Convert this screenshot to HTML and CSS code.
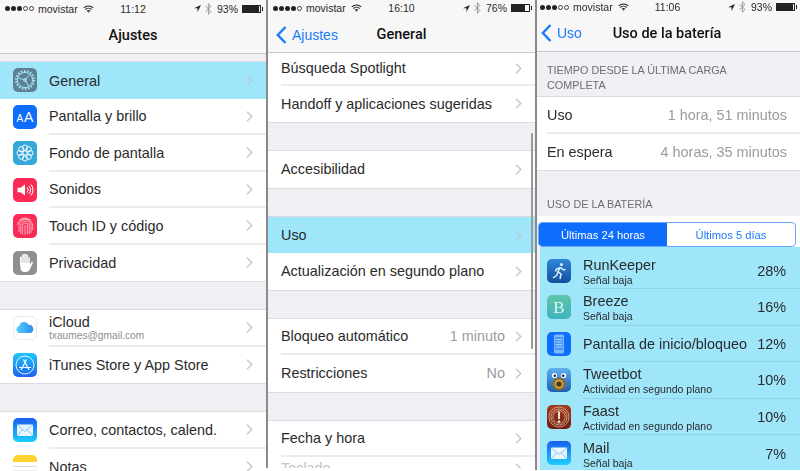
FILE: index.html
```html
<!DOCTYPE html>
<html lang="es">
<head>
  <meta charset="UTF-8">
  <title>Ajustes</title>
  <link rel="stylesheet" href="styles.css">
</head>
<body>

<svg class="defs" width="0" height="0">
  <defs>
    <linearGradient id="gBlue" x1="0" y1="0" x2="0" y2="1"><stop offset="0" stop-color="#1a5df0"/><stop offset="1" stop-color="#1bd0fd"/></linearGradient>
    <linearGradient id="gStore" x1="0" y1="0" x2="0" y2="1"><stop offset="0" stop-color="#1bc8fb"/><stop offset="1" stop-color="#1d62f0"/></linearGradient>
    <linearGradient id="gCloud" x1="0" y1="0" x2="1" y2="0"><stop offset="0" stop-color="#5ad0fa"/><stop offset="1" stop-color="#2a8df2"/></linearGradient>
    <linearGradient id="gRun" x1="0" y1="0" x2="0" y2="1"><stop offset="0" stop-color="#2f86d8"/><stop offset="1" stop-color="#134f9e"/></linearGradient>
    <linearGradient id="gBreeze" x1="0" y1="0" x2="0" y2="1"><stop offset="0" stop-color="#5fc6a8"/><stop offset="1" stop-color="#3fb4c0"/></linearGradient>
    <linearGradient id="gTweet" x1="0" y1="0" x2="0" y2="1"><stop offset="0" stop-color="#5fb0ee"/><stop offset="1" stop-color="#1f5fae"/></linearGradient>
    <linearGradient id="gFaast" x1="0" y1="0" x2="0" y2="1"><stop offset="0" stop-color="#a33c1c"/><stop offset="1" stop-color="#6f1f0c"/></linearGradient>

    <symbol id="chev" viewBox="0 0 7 11"><path d="M1 .8 5.800 5.500 1 10.200" fill="none" stroke="#c4c4c9" stroke-width="1.300"/></symbol>
    <symbol id="back" viewBox="0 0 11 18"><path d="M9.500 1 1.800 9l7.700 8" fill="none" stroke="#1a7bfb" stroke-width="2.400"/></symbol>
    <symbol id="wifi" viewBox="0 0 14 10"><path d="M1 3.600a8.600 8.600 0 0 1 12 0M3 5.800a5.700 5.700 0 0 1 8 0M5 7.800a2.800 2.800 0 0 1 4 0" fill="none" stroke="#222" stroke-width="1.300"/><path d="M5.800 8.600 7 9.900l1.200-1.300a1.700 1.700 0 0 0-2.400 0z" fill="#222"/></symbol>
    <symbol id="loc" viewBox="0 0 8 8"><path d="M8 0 0 3.600h4V8z" fill="#222"/></symbol>
    <symbol id="bt" viewBox="0 0 7 12"><path d="M.6 3.200 6 8.600 3.400 11.200V.8L6 3.400.6 8.800" fill="none" stroke="#8e8e93" stroke-width=".9"/></symbol>
    <symbol id="mail" viewBox="0 0 24 24"><rect width="24" height="24" rx="5" fill="url(#gBlue)"/><rect x="4" y="6.500" width="16" height="11.500" rx="1" fill="#e9f6fe"/><path d="M4.400 7 12 13.400 19.600 7M4.400 17.600l5.400-6M19.600 17.600l-5.400-6" fill="none" stroke="#6cb8f5" stroke-width=".8"/></symbol>
  </defs>
</svg>

<div class="screens">

  <section class="phone phone-a">
    <div class="status">
      <div class="status-left"><span class="dots"><i></i><i></i><i></i><i class="off"></i><i class="off"></i></span><span>movistar</span><svg class="wifi"><use href="#wifi"/></svg></div>
      <div>11:12</div>
      <div class="status-right"><svg class="loc"><use href="#loc"/></svg><svg class="bt"><use href="#bt"/></svg><span>93%</span><span class="batt"><b class="lvl-93"></b></span></div>
    </div>
    <header class="nav"><div></div><h1>Ajustes</h1><div></div></header>

    <div class="gap gap-sm"></div>
    <div class="group">
      <div class="row active">
        <svg class="icon" viewBox="0 0 24 24"><rect width="24" height="24" rx="5" fill="#5f808f"/><circle cx="12" cy="12" r="7.600" fill="none" stroke="#9fe6fb" stroke-width="1"/><circle cx="12" cy="12" r="9" fill="none" stroke="#9fe6fb" stroke-width="2" stroke-dasharray="1.600 1.550"/><path d="M12 12 5.500 10M12 12l4.500-5.200M12 12l3.600 6" fill="none" stroke="#9fe6fb" stroke-width="1"/><circle cx="12" cy="12" r="1.600" fill="none" stroke="#9fe6fb" stroke-width=".8"/></svg>
        <div class="row-main"><span>General</span><svg class="chev"><use href="#chev"/></svg></div>
      </div>
      <div class="row">
        <svg class="icon" viewBox="0 0 24 24"><rect width="24" height="24" rx="5" fill="#0f6dfb"/><text x="3.500" y="16.500" class="glyph glyph-sm">A</text><text x="11" y="17" class="glyph glyph-lg">A</text></svg>
        <div class="row-main"><span>Pantalla y brillo</span><svg class="chev"><use href="#chev"/></svg></div>
      </div>
      <div class="row">
        <svg class="icon" viewBox="0 0 24 24"><rect width="24" height="24" rx="5" fill="#35a8da"/><g fill="none" stroke="#fff" stroke-width=".9"><circle cx="12" cy="12" r="2.200"/><circle cx="12" cy="6.600" r="2.600"/><circle cx="12" cy="17.400" r="2.600"/><circle cx="6.600" cy="12" r="2.600"/><circle cx="17.400" cy="12" r="2.600"/><circle cx="8.200" cy="8.200" r="2.600"/><circle cx="15.800" cy="8.200" r="2.600"/><circle cx="8.200" cy="15.800" r="2.600"/><circle cx="15.800" cy="15.800" r="2.600"/></g></svg>
        <div class="row-main"><span>Fondo de pantalla</span><svg class="chev"><use href="#chev"/></svg></div>
      </div>
      <div class="row">
        <svg class="icon" viewBox="0 0 24 24"><rect width="24" height="24" rx="5" fill="#fb2b56"/><path d="M4.500 9.800h3L12 6.400v11.200l-4.500-3.400h-3z" fill="#fff"/><path d="M14 9.500a3.500 3.500 0 0 1 0 5M16 8a6 6 0 0 1 0 8M18 6.500a8.500 8.500 0 0 1 0 11" fill="none" stroke="#fff" stroke-width="1"/></svg>
        <div class="row-main"><span>Sonidos</span><svg class="chev"><use href="#chev"/></svg></div>
      </div>
      <div class="row">
        <svg class="icon" viewBox="0 0 24 24"><rect width="24" height="24" rx="5" fill="#fb2b56"/><g fill="none" stroke="#ffd9e0" stroke-width=".7"><path d="M6 6.500a8.300 8.300 0 0 1 12 0"/><path d="M4.400 11a7.800 7.800 0 0 1 15.200 0c.3 2 .3 3.500 0 5"/><path d="M6 18V11.500a6 6 0 0 1 12 0V19"/><path d="M7.800 20V11.500a4.200 4.200 0 0 1 8.400 0V20"/><path d="M9.600 20.500V11.500a2.400 2.400 0 0 1 4.800 0V20.500"/><path d="M12 11v10"/></g></svg>
        <div class="row-main"><span>Touch ID y código</span><svg class="chev"><use href="#chev"/></svg></div>
      </div>
      <div class="row">
        <svg class="icon" viewBox="0 0 24 24"><rect width="24" height="24" rx="5" fill="#8e8e93"/><path d="M7 12.500V6.500a1 1 0 0 1 2 0V4.200a1 1 0 0 1 2 0V3.800a1 1 0 0 1 2 0v.7a1 1 0 0 1 2 0v2a1 1 0 0 1 1.800.4v6.500l1.500-2.200c.8-1 2-.2 1.500.8l-3 6.500c-.9 1.700-2 2.500-4 2.500h-1.500c-2.500 0-3.800-1.700-3.800-4z" fill="#fff"/><path d="M9 6v6M11 4v8M13 4v8M15 6v6" stroke="#8e8e93" stroke-width=".5"/></svg>
        <div class="row-main"><span>Privacidad</span><svg class="chev"><use href="#chev"/></svg></div>
      </div>
    </div>

    <div class="gap"></div>
    <div class="group">
      <div class="row">
        <svg class="icon" viewBox="0 0 24 24"><rect x=".4" y=".4" width="23.200" height="23.200" rx="5" fill="#fff" stroke="#e4e4e6" stroke-width=".8"/><path d="M7 17a3.500 3.500 0 0 1-.8-6.900A5 5 0 0 1 15.600 8.700 4.300 4.300 0 0 1 17.500 17z" fill="url(#gCloud)"/></svg>
        <div class="row-main"><div class="stack"><span>iCloud</span><small class="mail">txaumes@gmail.com</small></div><svg class="chev"><use href="#chev"/></svg></div>
      </div>
      <div class="row">
        <svg class="icon" viewBox="0 0 24 24"><rect width="24" height="24" rx="5" fill="url(#gStore)"/><circle cx="12" cy="12" r="9" fill="none" stroke="#fff" stroke-width=".9"/><path d="M8 17 13.500 6.500M16 17 10.500 6.500M6 14.500h12" fill="none" stroke="#fff" stroke-width="1.200"/></svg>
        <div class="row-main"><span>iTunes Store y App Store</span><svg class="chev"><use href="#chev"/></svg></div>
      </div>
    </div>

    <div class="gap"></div>
    <div class="group">
      <div class="row">
        <svg class="icon"><use href="#mail"/></svg>
        <div class="row-main"><span>Correo, contactos, calend.</span><svg class="chev"><use href="#chev"/></svg></div>
      </div>
      <div class="row">
        <svg class="icon" viewBox="0 0 24 24"><rect width="24" height="24" rx="5" fill="#fff"/><path d="M0 7V5a5 5 0 0 1 5-5h14a5 5 0 0 1 5 5v2z" fill="#fed330"/><path d="M0 11.500h24M0 16h24" stroke="#d8d8d8" stroke-width=".8"/></svg>
        <div class="row-main"><span>Notas</span><svg class="chev"><use href="#chev"/></svg></div>
      </div>
    </div>
  </section>

  <section class="phone phone-b">
    <div class="status">
      <div class="status-left"><span class="dots"><i></i><i></i><i></i><i></i><i class="off"></i></span><span>movistar</span><svg class="wifi"><use href="#wifi"/></svg></div>
      <div>16:10</div>
      <div class="status-right"><svg class="loc"><use href="#loc"/></svg><svg class="bt"><use href="#bt"/></svg><span>76%</span><span class="batt"><b class="lvl-76"></b></span></div>
    </div>
    <header class="nav"><a class="back"><svg class="back-icon"><use href="#back"/></svg>Ajustes</a><h1>General</h1><div></div></header>

    <div class="group no-top">
      <div class="row row-short"><div class="row-main"><span>Búsqueda Spotlight</span><svg class="chev"><use href="#chev"/></svg></div></div>
      <div class="row"><div class="row-main"><span>Handoff y aplicaciones sugeridas</span><svg class="chev"><use href="#chev"/></svg></div></div>
    </div>
    <div class="gap"></div>
    <div class="group">
      <div class="row"><div class="row-main"><span>Accesibilidad</span><svg class="chev"><use href="#chev"/></svg></div></div>
    </div>
    <div class="gap"></div>
    <div class="group">
      <div class="row active"><div class="row-main"><span>Uso</span><svg class="chev"><use href="#chev"/></svg></div></div>
      <div class="row"><div class="row-main"><span>Actualización en segundo plano</span><svg class="chev"><use href="#chev"/></svg></div></div>
    </div>
    <div class="gap"></div>
    <div class="group">
      <div class="row"><div class="row-main"><span>Bloqueo automático</span><em>1 minuto</em><svg class="chev"><use href="#chev"/></svg></div></div>
      <div class="row"><div class="row-main"><span>Restricciones</span><em>No</em><svg class="chev"><use href="#chev"/></svg></div></div>
    </div>
    <div class="gap"></div>
    <div class="group">
      <div class="row"><div class="row-main"><span>Fecha y hora</span><svg class="chev"><use href="#chev"/></svg></div></div>
      <div class="row row-cut"><div class="row-main"><span>Teclado</span><svg class="chev"><use href="#chev"/></svg></div></div>
    </div>
    <div class="scrollbar"></div>
  </section>

  <section class="phone phone-c">
    <div class="status">
      <div class="status-left"><span class="dots"><i></i><i></i><i></i><i class="off"></i><i class="off"></i></span><span>movistar</span><svg class="wifi"><use href="#wifi"/></svg></div>
      <div>11:06</div>
      <div class="status-right"><svg class="loc"><use href="#loc"/></svg><svg class="bt"><use href="#bt"/></svg><span>93%</span><span class="batt"><b class="lvl-93"></b></span></div>
    </div>
    <header class="nav"><a class="back"><svg class="back-icon"><use href="#back"/></svg>Uso</a><h1>Uso de la batería</h1><div></div></header>

    <h2 class="section-head">Tiempo desde la última carga completa</h2>
    <div class="group">
      <div class="row"><div class="row-main"><span>Uso</span><em>1 hora, 51 minutos</em></div></div>
      <div class="row"><div class="row-main"><span>En espera</span><em>4 horas, 35 minutos</em></div></div>
    </div>
    <h2 class="section-head section-low">Uso de la batería</h2>

    <div class="seg-wrap">
      <div class="seg"><div class="seg-on">Últimas 24 horas</div><div>Últimos 5 días</div></div>
    </div>

    <div class="usage">
      <div class="use-row">
        <svg class="icon" viewBox="0 0 24 24"><rect width="24" height="24" rx="5" fill="url(#gRun)"/><circle cx="14.500" cy="5.500" r="1.500" fill="#dff1fd"/><path d="M13.500 8 11 12.500l3 2.500-1 5M13.500 8.500l3 2.500 2-.5M12.500 9l-3 1-1 2.500M11 13.500l-1.500 3-3.500 2.500" fill="none" stroke="#dff1fd" stroke-width="1.500"/></svg>
        <div class="use-main"><div class="stack"><span>RunKeeper</span><small>Señal baja</small></div><strong>28%</strong></div>
      </div>
      <div class="use-row">
        <svg class="icon" viewBox="0 0 24 24"><rect width="24" height="24" rx="5" fill="url(#gBreeze)"/><text x="12" y="18" class="glyph-b">B</text></svg>
        <div class="use-main"><div class="stack"><span>Breeze</span><small>Señal baja</small></div><strong>16%</strong></div>
      </div>
      <div class="use-row">
        <svg class="icon" viewBox="0 0 24 24"><rect width="24" height="24" rx="5" fill="#0f6dfb"/><rect x="7" y="2.500" width="10" height="19" rx="1.500" fill="#7db8fb"/><rect x="8" y="5" width="8" height="13" fill="#4a95f8"/><path d="M9 7.500h6M9 10h6M9 12.500h6M9 15h6" stroke="#a5cffc" stroke-width="1"/></svg>
        <div class="use-main"><div class="stack"><span>Pantalla de inicio/bloqueo</span></div><strong>12%</strong></div>
      </div>
      <div class="use-row">
        <svg class="icon" viewBox="0 0 24 24"><rect width="24" height="24" rx="5" fill="url(#gTweet)"/><circle cx="7.500" cy="7.500" r="2.600" fill="#fff"/><circle cx="16.500" cy="7.500" r="2.600" fill="#fff"/><circle cx="7.800" cy="7.800" r="1.300" fill="#123"/><circle cx="16.200" cy="7.800" r="1.300" fill="#123"/><circle cx="12" cy="16" r="6.500" fill="#8a6a2a"/><circle cx="12" cy="16" r="4.500" fill="#c8a24a"/><circle cx="12" cy="16" r="2.600" fill="#4a3418"/></svg>
        <div class="use-main"><div class="stack"><span>Tweetbot</span><small>Actividad en segundo plano</small></div><strong>10%</strong></div>
      </div>
      <div class="use-row">
        <svg class="icon" viewBox="0 0 24 24"><rect width="24" height="24" rx="5" fill="url(#gFaast)"/><g fill="none" stroke="#e8c8b8" stroke-width=".7"><circle cx="12" cy="12" r="10"/><circle cx="12" cy="12" r="8"/><circle cx="12" cy="12" r="6.200"/></g><rect x="11" y="6.500" width="2" height="7.500" fill="#f4e4da"/><circle cx="12" cy="16.500" r="1.200" fill="#f4e4da"/></svg>
        <div class="use-main"><div class="stack"><span>Faast</span><small>Actividad en segundo plano</small></div><strong>10%</strong></div>
      </div>
      <div class="use-row">
        <svg class="icon"><use href="#mail"/></svg>
        <div class="use-main"><div class="stack"><span>Mail</span><small>Señal baja</small></div><strong>7%</strong></div>
      </div>
    </div>
  </section>

</div>

</body>
</html>
```

FILE: styles.css
```css
* { box-sizing: border-box; }
html, body { margin: 0; height: 100%; overflow: hidden; background: #fff; }
body {
  font-family: "Liberation Sans", Arial, sans-serif;
  color: #2a2a2a;
  font-size: 14.4px;
}
.defs { display: block; height: 0; }
.screens { display: flex; align-items: flex-start; filter: blur(.3px); }

.phone { position: relative; overflow: hidden; background: #efeff4; flex: none; }
.phone-a { width: 266px; height: 471px; }
.phone-b { width: 269px; height: 468px; border-left: 2px solid #8a8a8a; }
.phone-c { width: 265px; height: 470px; border-left: 2px solid #8a8a8a; }

/* status bar + nav */
.status {
  height: 17px;
  padding: 0 5px;
  display: grid;
  grid-template-columns: 1fr auto 1fr;
  align-items: center;
  font-size: 10.5px;
  background: #f7f7f8;
}
.status-left, .status-right { display: flex; align-items: center; }
.status-right { justify-content: flex-end; }
.status-left span { margin-right: 4px; }
.dots { display: flex; gap: 1px; margin-right: 4px; }
.dots i { width: 5px; height: 5px; border-radius: 50%; background: #222; }
.dots i.off { background: none; border: 0.7px solid #444; }
.wifi { width: 11px; height: 8px; margin-left: 1px; }
.loc { width: 7px; height: 7px; margin-right: 4px; }
.bt { width: 7px; height: 12px; margin-right: 5px; }
.batt {
  width: 19px;
  height: 8px;
  margin-left: 4px;
  border: 1px solid #222;
  display: block;
  position: relative;
}
.batt:after { content: ""; position: absolute; right: -3px; top: 1px; width: 1px; height: 4px; background: #222; }
.batt b { display: block; height: 100%; background: #222; }
.lvl-93 { width: 93%; }
.lvl-76 { width: 76%; }
.phone-b .status { height: 16px; }
.phone-c .status { height: 14px; padding-left: 3px; }

.nav {
  height: 37px;
  padding: 0 8px;
  display: grid;
  grid-template-columns: 1fr auto 1fr;
  align-items: center;
  background: #f7f7f8;
  border-bottom: 1px solid #c8c7cc;
}
.phone-b .nav { padding-top: 1px; }
.phone-c .nav { height: 38px; padding: 1px 7px 0 4px; }
.nav h1 { margin: 0; font-family: Roboto, "Liberation Sans", sans-serif; font-size: 14.5px; font-weight: 500; color: #111; }
.back { display: flex; align-items: center; gap: 5px; color: #1a7bfb; font-size: 14px; }
.back-icon { width: 11px; height: 18px; }

/* grouped lists */
.gap { height: 27px; }
.gap-sm { height: 7px; }
.group { background: #fff; border-top: 1px solid #dcdce0; border-bottom: 1px solid #dcdce0; }
.group.no-top { border-top: 0; }
.row { display: flex; align-items: center; height: 36.5px; padding-left: 13px; }
.row .icon { margin-right: 12.5px; }
.phone-a .row { padding-left: 12.5px; }
.row-main {
  flex: 1;
  align-self: stretch;
  display: flex;
  align-items: center;
  padding: 1px 13px 0 0;
  border-bottom: 2px solid #ececef;
  min-width: 0;
}
.row:last-child .row-main { border-bottom: 0; padding-top: 0; }
.row-main > span, .row-main > .stack { flex: 1; }
.row-main em { font-style: normal; color: #9a9a9f; margin-right: 10px; }
.chev { width: 7px; height: 11px; flex: none; }
.icon { width: 24px; height: 24px; flex: none; display: block; }
.glyph { fill: #fff; font-family: "Liberation Sans", Arial, sans-serif; }
.glyph-sm { font-size: 10px; }
.glyph-lg { font-size: 14px; }
.glyph-b { fill: #e4f6f4; font: 17px "Liberation Serif", serif; text-anchor: middle; }

.row.active { background: #9fe6fb; }
.row.active .row-main { border-bottom: 0; }
.row.active .chev { opacity: .8; }
.row-short { height: 32.5px; }
.row-short .row-main { padding-top: 0; }
.row-cut { height: 22px; color: #c4c4c4; }

.stack { display: flex; flex-direction: column; }
.stack small { font-size: 10.5px; line-height: 12px; color: #2a2a2a; }
.stack small.mail { font-size: 10.2px; color: #8e8e93; }

.scrollbar {
  position: absolute;
  right: 2px;
  top: 133px;
  width: 2px;
  height: 216px;
  background: #9a9a9a;
  border-radius: 1px;
}

/* battery screen */
.phone-c .row { padding-left: 10px; }
.phone-c .row-main em { margin-right: 0; }
.section-head {
  margin: 0;
  padding: 11px 40px 3px 10px;
  font-size: 10.8px;
  line-height: 15px;
  font-weight: 400;
  text-transform: uppercase;
  color: #6d6d72;
}
.section-low { padding-top: 26px; padding-bottom: 4px; }
.seg-wrap { background: #fff; padding: 6px 4px 0 0; margin-left: 1px; height: 31px; }
.seg {
  display: flex;
  height: 25px;
  border: 1px solid #6aa6fa;
  border-radius: 4px;
  overflow: hidden;
  font-size: 11.2px;
  color: #1a7bfb;
}
.seg div { flex: 1; display: flex; align-items: center; justify-content: center; }
.seg .seg-on { background: #0f6dfb; color: #fff; }

.usage { background: #9fe6fb; margin-left: 3px; padding-top: 5.5px; height: 224px; }
.use-row { display: flex; height: 36.5px; padding-left: 7px; align-items: center; }
.use-row .icon { margin-right: 12px; }
.use-main {
  flex: 1;
  align-self: stretch;
  display: flex;
  align-items: center;
  padding: 1px 14px 0 0;
  border-bottom: 1px solid #8fd3e8;
}
.use-row:last-child .use-main { border-bottom: 0; }
.use-main .stack { flex: 1; }
.use-main span { line-height: 18px; }
.use-main strong { font-weight: 400; }
```
